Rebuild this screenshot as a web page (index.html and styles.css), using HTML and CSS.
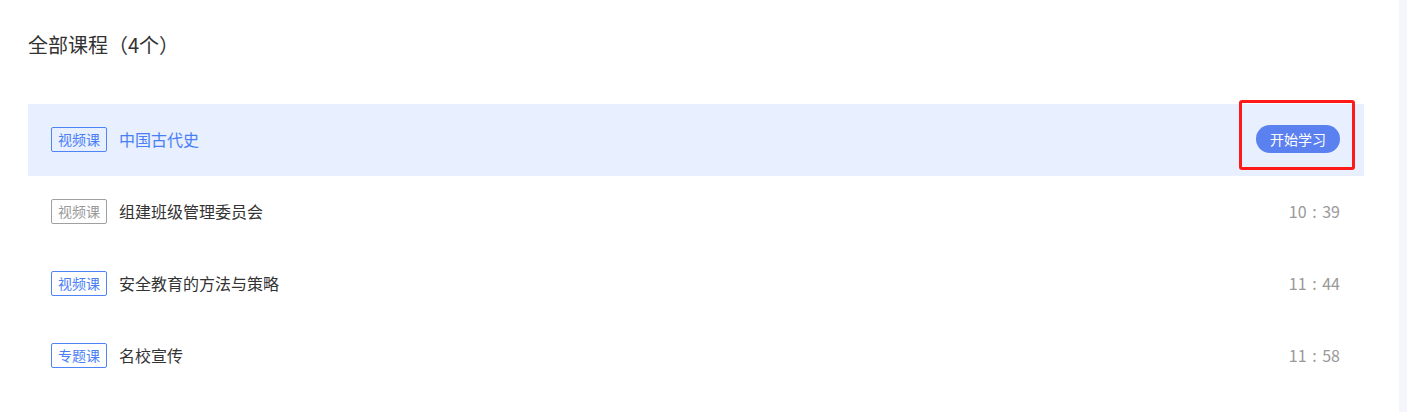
FILE: index.html
```html
<!DOCTYPE html>
<html lang="zh-CN">
<head>
<meta charset="utf-8">
<title>全部课程</title>
<link rel="stylesheet" href="styles.css">
</head>
<body>
<div class="page">
  <main class="content">
    <h1 class="heading">全部课程（4个）</h1>
    <ul class="course-list">
      <li class="course active">
        <div class="course-info">
          <span class="tag tag-blue">视频课</span>
          <span class="course-title">中国古代史</span>
        </div>
        <div class="action">
          <button class="start-btn">开始学习</button>
          <span class="mark"></span>
        </div>
      </li>
      <li class="course">
        <div class="course-info">
          <span class="tag tag-gray">视频课</span>
          <span class="course-title">组建班级管理委员会</span>
        </div>
        <span class="duration">10 : 39</span>
      </li>
      <li class="course">
        <div class="course-info">
          <span class="tag tag-blue">视频课</span>
          <span class="course-title">安全教育的方法与策略</span>
        </div>
        <span class="duration">11 : 44</span>
      </li>
      <li class="course">
        <div class="course-info">
          <span class="tag tag-blue">专题课</span>
          <span class="course-title">名校宣传</span>
        </div>
        <span class="duration">11 : 58</span>
      </li>
    </ul>
  </main>
  <aside class="side-strip"></aside>
</div>
</body>
</html>
```

FILE: styles.css
```css
* {
  box-sizing: border-box;
}

html, body {
  margin: 0;
  padding: 0;
  background: #ffffff;
}

body {
  font-family: "Noto Sans CJK SC", "Noto Sans", sans-serif;
  color: #333333;
}

.page {
  display: flex;
  width: 1407px;
  height: 412px;
  overflow: hidden;
}

.content {
  flex: 0 0 1399px;
  padding: 31px 35px 0 28px;
}

.side-strip {
  flex: 1;
  background: #f5f6fb;
}

.heading {
  margin: 0 0 45px;
  font-size: 20px;
  font-weight: 400;
  line-height: 28px;
  color: #333333;
}

.course-list {
  list-style: none;
  margin: 0;
  padding: 0;
}

.course {
  display: flex;
  align-items: center;
  justify-content: space-between;
  height: 72px;
  padding: 0 24px 2px 23px;
}

.course.active {
  background: #e8effe;
}

.course-info {
  display: flex;
  align-items: center;
  gap: 12px;
}

.tag {
  display: inline-block;
  height: 25px;
  padding: 0 6px;
  border: 1px solid;
  border-radius: 2px;
  font-size: 14px;
  line-height: 23px;
}

.tag-blue {
  color: #4a7ef5;
  border-color: #4f84f6;
}

.tag-gray {
  color: #999999;
  border-color: #a0a0a0;
}

.course-title {
  font-size: 16px;
  line-height: 24px;
  color: #333333;
}

.active .course-title {
  color: #4a7ef5;
}

.duration {
  font-size: 16px;
  line-height: 24px;
  color: #999999;
  word-spacing: 2px;
}

.action {
  position: relative;
  display: flex;
}

.start-btn {
  height: 28px;
  padding: 0 14px;
  border: none;
  border-radius: 14px;
  background: #5b80f0;
  color: #ffffff;
  font-family: inherit;
  font-size: 14px;
  line-height: 28px;
  cursor: pointer;
}

.mark {
  position: absolute;
  top: -25px;
  bottom: -17px;
  left: -17px;
  right: -15px;
  border: 3px solid #ff1a1a;
  border-radius: 3px;
  pointer-events: none;
}
```
